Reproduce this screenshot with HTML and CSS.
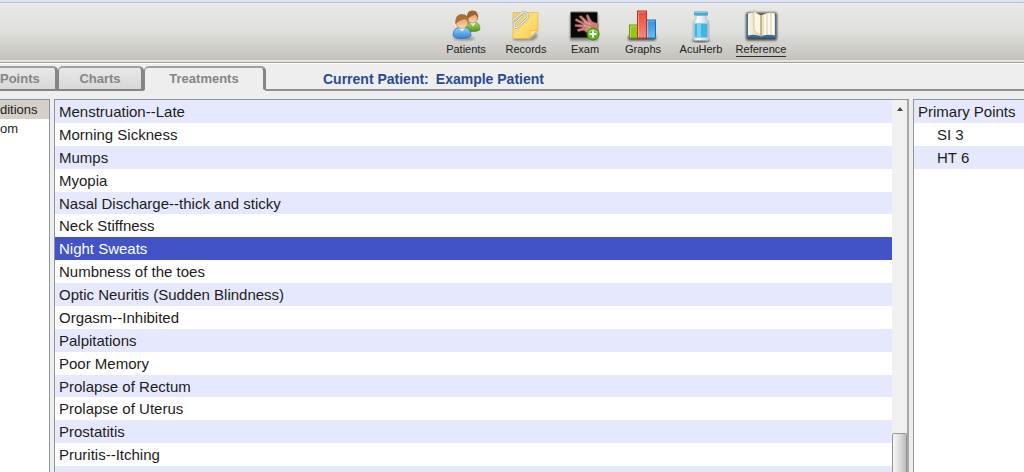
FILE: index.html
```html
<!DOCTYPE html>
<html lang="en">
<head>
<meta charset="utf-8">
<title>Reference - Treatments</title>
<link rel="stylesheet" href="styles.css">
</head>
<body>
<div class="app">
  <header class="toolbar">
    <button class="tool" type="button">
      <svg class="icon" viewBox="0 0 36 36" aria-hidden="true">
        <defs>
          <linearGradient id="blue" x1="0" y1="0" x2="0" y2="1"><stop offset="0" stop-color="#9bd0f8"/><stop offset="1" stop-color="#2f82d6"/></linearGradient>
          <linearGradient id="green" x1="0" y1="0" x2="0" y2="1"><stop offset="0" stop-color="#a8d65c"/><stop offset="1" stop-color="#4e961e"/></linearGradient>
          <linearGradient id="skin" x1="0" y1="0" x2="0" y2="1"><stop offset="0" stop-color="#d9935a"/><stop offset="1" stop-color="#fbdcae"/></linearGradient>
          <filter id="soft" x="-30%" y="-30%" width="160%" height="160%"><feGaussianBlur stdDeviation="1.3"/></filter>
        </defs>
        <ellipse cx="16" cy="32" rx="11" ry="2" fill="#555" opacity=".5" filter="url(#soft)"/>
        <path d="M17 23q0-7 6-7h4q5 0 5 7-1 2-7.500 2t-7.500-2z" fill="url(#green)" stroke="#4b8422" stroke-width=".6"/>
        <path d="M22 16l3 4 3-4z" fill="#eef5e4"/>
        <circle cx="24.500" cy="11.500" r="5" fill="url(#skin)" stroke="#9a632c" stroke-width=".5"/>
        <path d="M19 13q-1-9 5.500-9 6.500 0 5.500 9-1-4-3-5-4 1.500-8 5z" fill="#9a6432"/>
        <path d="M5 29q0-8 7-8h4q7 0 7 8-1 3-9 3t-9-3z" fill="url(#blue)" stroke="#2c70b8" stroke-width=".7"/>
        <path d="M10.500 21l3.500 4 3.500-4z" fill="#eaf5ff"/>
        <circle cx="14" cy="16" r="6" fill="url(#skin)" stroke="#a56d30" stroke-width=".5"/>
        <path d="M7.500 17.500q-1-10 6.500-10t6.500 10q-1-4-3-5-5 .5-10 5z" fill="#a87038"/>
      </svg>
      <span class="tool-label">Patients</span>
    </button>
    <button class="tool" type="button">
      <svg class="icon" viewBox="0 0 36 36" aria-hidden="true">
        <defs><linearGradient id="note" x1="0" y1="0" x2="1" y2="1"><stop offset="0" stop-color="#f7d15a"/><stop offset=".5" stop-color="#fcdd74"/><stop offset="1" stop-color="#f8c94a"/></linearGradient></defs>
        <path d="M5 31h18l6-5v5l-4 3H6z" fill="#555" opacity=".6" filter="url(#soft)"/>
        <path d="M5 6h25v18l-9 8H5z" fill="url(#note)" stroke="#e3b43e" stroke-width=".6"/>
        <path d="M30 23l-9 9q2-4 1-8 4 1 8-1z" fill="#ffe391" stroke="#dfaa36" stroke-width=".5"/>
        <g transform="rotate(48 12 13)" fill="none" stroke-linecap="round">
          <path d="M8 19V8q0-4 4-4t4 4v11q0 3-2 3t-3-3V9" stroke="#a3a7a0" stroke-width="2.400"/>
          <path d="M8 19V8q0-4 4-4t4 4v11q0 3-2 3t-3-3V9" stroke="#eceeea" stroke-width="1.200"/>
        </g>
      </svg>
      <span class="tool-label">Records</span>
    </button>
    <button class="tool" type="button">
      <svg class="icon" viewBox="0 0 36 36" aria-hidden="true">
        <rect x="3" y="8" width="28" height="26" fill="#444" opacity=".6" filter="url(#soft)"/>
        <rect x="3.500" y="5.500" width="27" height="26" rx="1" fill="#090707" stroke="#77797a"/>
        <path d="M31 17v11h-5c-4 0-7-2-9-4l-6 1-1-2 6-2-8-1v-2l8 0-8-4 1-2 8 4-5-6 2-1 7 6-2-6 2-1 4 7z" fill="#ca7f7a" stroke="#8f4c4b" stroke-width=".5"/>
        <path d="M17 19l7 2M17 15l7 3M19 23l5-1" stroke="#e5aaa2" fill="none"/>
        <circle cx="26" cy="27.500" r="6" fill="#62b81c" stroke="#3f820e"/>
        <path d="M21.500 26q4-5 9 0" fill="none" stroke="#a3dc62" stroke-width="1.500"/>
        <path d="M26 24v7M22.500 27.500h7" stroke="#fff" stroke-width="2"/>
      </svg>
      <span class="tool-label">Exam</span>
    </button>
    <button class="tool" type="button">
      <svg class="icon" viewBox="0 0 36 36" aria-hidden="true">
        <defs>
          <linearGradient id="red" x1="0" y1="0" x2="0" y2="1"><stop offset="0" stop-color="#e64a36"/><stop offset="1" stop-color="#f28a7c"/></linearGradient>
          <linearGradient id="bar" x1="0" y1="0" x2="0" y2="1"><stop offset="0" stop-color="#2b93df"/><stop offset="1" stop-color="#68bdf4"/></linearGradient>
        </defs>
        <rect x="3" y="29" width="28" height="5" rx="2" fill="#222" opacity=".75" filter="url(#soft)"/>
        <rect x="4.500" y="18.500" width="8" height="13" fill="#91c813" stroke="#5e9b06"/>
        <rect x="21.500" y="13.500" width="9" height="18" fill="url(#bar)" stroke="#1971b4"/>
        <rect x="12.500" y="4.500" width="9" height="27" fill="url(#red)" stroke="#c62d20"/>
        <path d="M5.500 31V19.500H12M13.500 31V5.500H21M22.500 31V14.500H30" fill="none" stroke="#fff" opacity=".35"/>
      </svg>
      <span class="tool-label">Graphs</span>
    </button>
    <button class="tool" type="button">
      <svg class="icon" viewBox="0 0 36 36" aria-hidden="true">
        <defs><linearGradient id="glass" x1="0" x2="1"><stop offset="0" stop-color="#c3ccd1"/><stop offset=".3" stop-color="#fff"/><stop offset="1" stop-color="#bfc8cd"/></linearGradient></defs>
        <ellipse cx="18" cy="34" rx="9" ry="1.800" fill="#333" opacity=".8" filter="url(#soft)"/>
        <path d="M13 9h10v3q3 2 3 5v15q0 2-2 2H12q-2 0-2-2V17q0-3 3-5z" fill="url(#glass)" stroke="#a6b0b5" stroke-width=".7"/>
        <rect x="11" y="5" width="14" height="4" rx="1" fill="#3baadf"/>
        <path d="M12 6h12" stroke="#80d0f2"/>
        <rect x="11.500" y="17" width="13" height="14" fill="#40b4e7"/>
        <rect x="14" y="17" width="4" height="14" fill="#78d0f4"/>
      </svg>
      <span class="tool-label">AcuHerb</span>
    </button>
    <button class="tool tool-current" type="button">
      <svg class="icon" viewBox="0 0 36 36" aria-hidden="true">
        <defs><linearGradient id="page" x1="0" x2="1"><stop offset="0" stop-color="#fbf4e5"/><stop offset=".8" stop-color="#ecd6b0"/><stop offset="1" stop-color="#c8a779"/></linearGradient></defs>
        <rect x="3" y="6" width="31" height="28" rx="2" fill="#222" opacity=".8" filter="url(#soft)"/>
        <path d="M4 9h29v22H20l-1 1-2-1H4z" fill="#2a71af"/>
        <path d="M5 7q7-2 13 2v21q-6-3-13-1z" fill="url(#page)"/>
        <path d="M18 9q7-4 14-2v22q-8-2-14 1z" fill="#f0dfc0"/>
        <path d="M22 8v20.500M26 7v21M30 7v21" stroke="#fffaf0" stroke-width="2"/>
        <path d="M11 3q2 5 7 6v20q-5-2-7-6z" fill="#fff7e8" stroke="#cdb48b" stroke-width=".7"/>
        <path d="M18 9v21" stroke="#ad8c60"/>
      </svg>
      <span class="tool-label">Reference</span>
    </button>
  </header>

  <nav class="tabbar">
    <button class="tab tab-points" type="button">Points</button>
    <button class="tab tab-charts" type="button">Charts</button>
    <button class="tab tab-active" type="button">Treatments</button>
    <p class="patient"><span>Current Patient:</span><span>Example Patient</span></p>
  </nav>

  <main class="panes">
    <ul class="pane sidebar">
      <li class="side-item side-selected">ditions</li>
      <li class="side-item">om</li>
    </ul>
    <section class="pane list-pane">
      <ul class="conditions">
        <li class="row">Menstruation--Late</li>
        <li class="row">Morning Sickness</li>
        <li class="row">Mumps</li>
        <li class="row">Myopia</li>
        <li class="row">Nasal Discharge--thick and sticky</li>
        <li class="row">Neck Stiffness</li>
        <li class="row row-selected">Night Sweats</li>
        <li class="row">Numbness of the toes</li>
        <li class="row">Optic Neuritis (Sudden Blindness)</li>
        <li class="row">Orgasm--Inhibited</li>
        <li class="row">Palpitations</li>
        <li class="row">Poor Memory</li>
        <li class="row">Prolapse of Rectum</li>
        <li class="row">Prolapse of Uterus</li>
        <li class="row">Prostatitis</li>
        <li class="row">Pruritis--Itching</li>
        <li class="row"></li>
      </ul>
      <div class="scrollbar">
        <svg class="arrow" viewBox="0 0 6 4" aria-hidden="true"><path d="M0 4l3-4 3 4z" fill="#444"/></svg>
        <div class="thumb"></div>
      </div>
    </section>
    <ul class="pane points">
      <li class="row">Primary Points</li>
      <li class="row row-child">SI 3</li>
      <li class="row row-child">HT 6</li>
    </ul>
  </main>
</div>
</body>
</html>
```

FILE: styles.css
```css
* {
  box-sizing: border-box;
}

body {
  margin: 0;
  background: #eeeeee;
  color: #1c1c1c;
  font-family: "Liberation Sans", Arial, sans-serif;
}

ul,
p {
  margin: 0;
  padding: 0;
  list-style: none;
}

button {
  margin: 0;
  font-family: inherit;
}

.app {
  display: flex;
  flex-direction: column;
  height: 100vh;
  overflow: hidden;
}

.toolbar {
  display: grid;
  grid-template-columns: 60px 60px 58px 58px 58px 62px;
  flex: none;
  height: 60px;
  padding: 2px 0 0 436px;
  border-top: 2px solid #dce3f6;
  background: linear-gradient(#b9c2da 0, #b9c2da 1px, #e9e9e7 1px, #dfdfdc 50%, #c4c2bc 100%);
}

.tool {
  display: flex;
  flex-direction: column;
  align-items: center;
  padding: 2px 0 0;
  border: 0;
  background: none;
  color: #222222;
  font-size: 11px;
  line-height: 13px;
}

.icon {
  display: block;
  width: 36px;
  height: 37px;
}

.tool-current .tool-label {
  border-bottom: 1px solid #333333;
}

.tabbar {
  display: flex;
  align-items: flex-end;
  flex: none;
  height: 31px;
  border-top: 2px solid #e4e3de;
  background: linear-gradient(#a09f98 0, #a09f98 1px, #ffffff 1px, #ffffff 2px, #eeeeee 2px);
}

.tab {
  height: 25px;
  padding: 0;
  border: solid #858585;
  border-width: 2px 3px 2px 1px;
  border-top-color: #a0a0a0;
  border-radius: 5px 5px 0 0;
  background: linear-gradient(#e8e8e8, #d8d8d8);
  color: #858585;
  font-size: 13px;
  font-weight: bold;
  line-height: 21px;
}

.tab-points {
  width: 58px;
  padding-right: 16px;
  border-left: 0;
  border-top-left-radius: 0;
  text-align: right;
}

.tab-charts {
  width: 86px;
}

.tab-active {
  width: 122px;
  border-bottom-color: #eeeeee;
  background: #eeeeee;
}

.patient {
  display: flex;
  flex: 1;
  gap: 7px;
  height: 25px;
  padding-left: 57px;
  border-bottom: 2px solid #909090;
  color: #274b93;
  font-size: 14px;
  font-weight: bold;
  line-height: 27px;
  white-space: nowrap;
}

.panes {
  display: grid;
  grid-template-columns: 50px minmax(0, 1fr) 111px;
  flex: 1;
  gap: 4px;
  min-height: 0;
  padding-top: 8px;
}

.pane {
  overflow: hidden;
  border-top: 1px solid #8d969d;
  background: #ffffff;
}

.sidebar {
  border-right: 1px solid #8d969d;
}

.side-item {
  height: 19px;
  font-size: 13px;
  line-height: 20px;
}

.side-selected {
  background: #d4d0c7;
}

.list-pane {
  display: flex;
  border-right: 2px solid #a2a8ae;
  border-left: 1px solid #8d969d;
}

.conditions {
  display: grid;
  grid-template-rows: repeat(16, minmax(22px, 1fr)) 6px;
  flex: 1;
}

.row {
  padding-left: 4px;
  font-size: 15px;
  line-height: 24px;
  white-space: nowrap;
}

.points .row {
  height: 23px;
}

.row:nth-child(odd) {
  background: #e6e9fd;
}

.conditions .row-selected {
  background: #4253c8;
  color: #ffffff;
}

.conditions .row {
  min-height: 0;
}

.scrollbar {
  display: flex;
  flex-direction: column;
  align-items: center;
  justify-content: space-between;
  width: 15px;
  padding-top: 7px;
  background: #f0f0f0;
}

.arrow {
  width: 6px;
  height: 4px;
}

.thumb {
  width: 15px;
  height: 39px;
  border: 1px solid #959595;
  border-bottom: 0;
  border-radius: 2px 2px 0 0;
  background: linear-gradient(90deg, #f6f6f6, #dedede 50%, #bdbdbd);
}

.points {
  border-left: 1px solid #8d969d;
}

.points .row-child {
  padding-left: 23px;
}
```
